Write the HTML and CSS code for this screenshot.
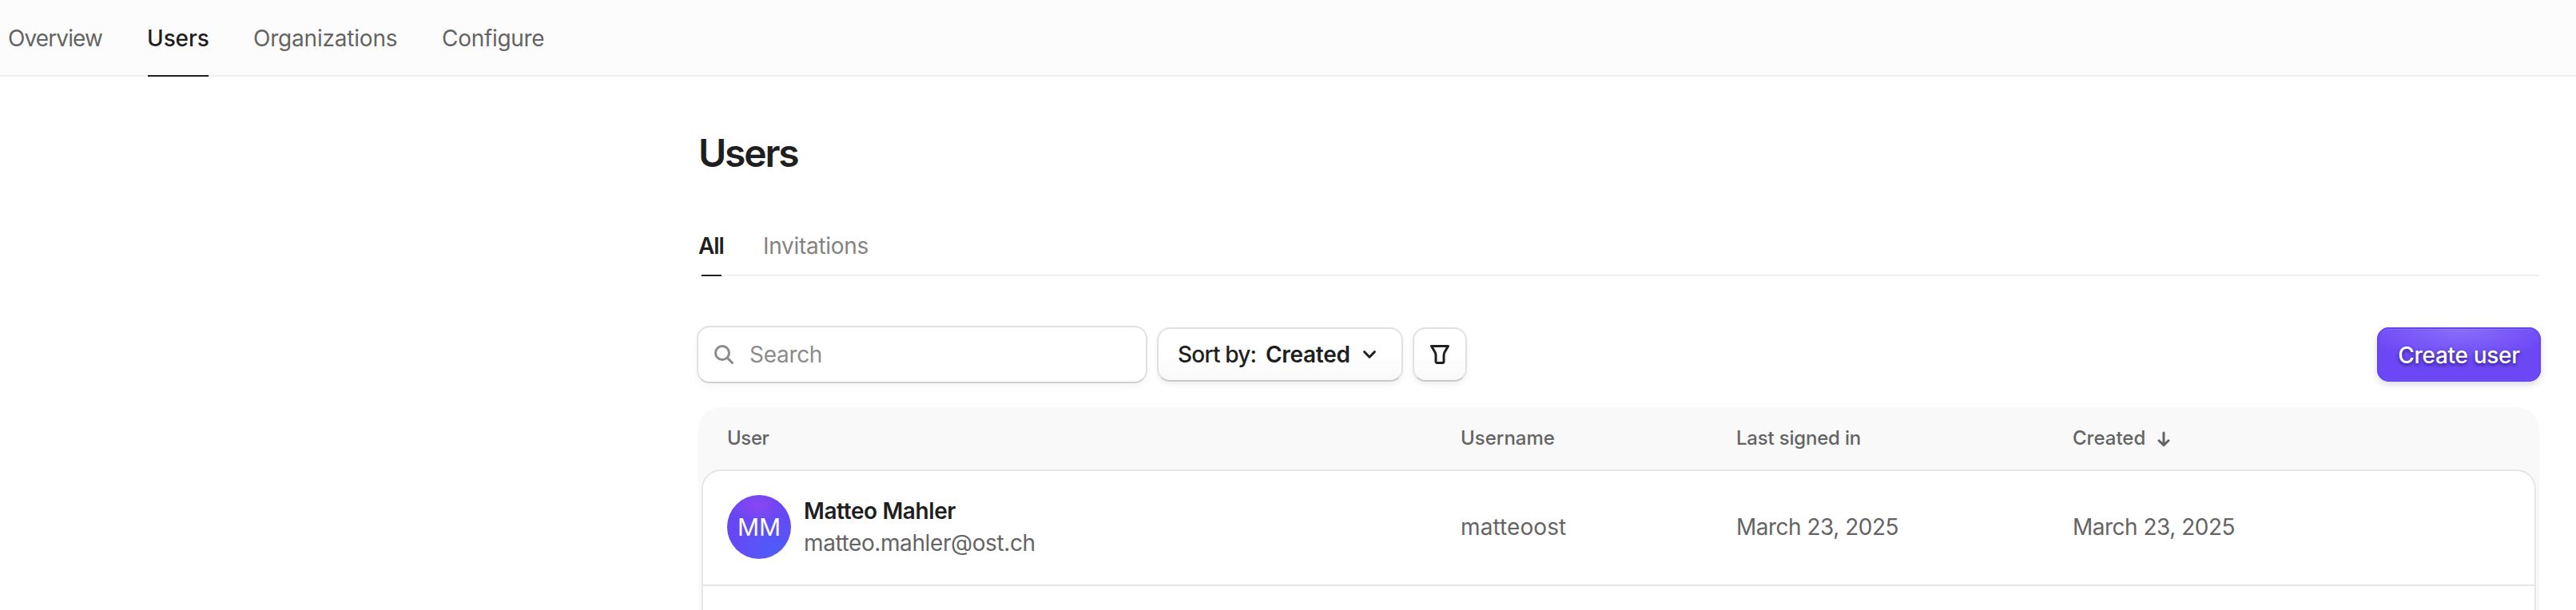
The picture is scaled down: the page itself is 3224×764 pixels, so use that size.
FILE: index.html
```html
<!DOCTYPE html>
<html lang="en">
<head>
<meta charset="utf-8">
<title>Users</title>
<link rel="stylesheet" href="styles.css">
</head>
<body>
<nav class="topnav">
  <a class="nav-item nav-overview">Overview</a>
  <a class="nav-item nav-users active">Users</a>
  <a class="nav-item nav-orgs">Organizations</a>
  <a class="nav-item nav-configure">Configure</a>
</nav>
<main class="page">
  <h1 class="title">Users</h1>
  <div class="tabs">
    <a class="tab tab-all">All</a>
    <a class="tab tab-invitations">Invitations</a>
  </div>
  <div class="toolbar">
    <div class="search">
      <svg class="icon-search" width="24" height="24" viewBox="0 0 24 24" fill="none" stroke="currentColor" stroke-width="3" stroke-linecap="round"><circle cx="10" cy="10" r="8.5"/><path d="M16.4 16.4l6 6"/></svg>
      <span class="search-text">Search</span>
    </div>
    <button class="btn sort">
      <span class="sort-label">Sort by:</span>
      <span class="sort-value">Created</span>
      <svg class="icon-chevron" width="16" height="10" viewBox="0 0 16 10" fill="none" stroke="currentColor" stroke-width="3" stroke-linecap="round" stroke-linejoin="round"><path d="M1.7 1.7L8 8.2l6.3-6.5"/></svg>
    </button>
    <button class="btn filter" aria-label="Filter">
      <svg width="24" height="24" viewBox="0 0 24 24" fill="none" stroke="currentColor" stroke-width="3" stroke-linejoin="round"><path d="M1.5 1.5h21L18.2 8.8q-1.2 2-1.2 4.2v7.8a1.7 1.7 0 0 1-1.7 1.7H8.7A1.7 1.7 0 0 1 7 20.800V13q0-2.200-1.200-4.200z"/></svg>
    </button>
    <button class="create">Create user</button>
  </div>
  <section class="table">
    <div class="thead cols">
      <span class="th-user">User</span>
      <span>Username</span>
      <span class="th-signed">Last signed in</span>
      <span class="th-created">Created
        <svg width="16" height="20" viewBox="0 0 16 20" fill="none" stroke="currentColor" stroke-width="3" stroke-linecap="round" stroke-linejoin="round"><path d="M8 2v15.500M2 11.800l6 5.900 6-5.900"/></svg>
      </span>
    </div>
    <div class="card">
      <div class="row cols">
        <div class="user">
          <div class="avatar">MM</div>
          <div>
            <div class="name">Matteo Mahler</div>
            <div class="email">matteo.mahler@ost.ch</div>
          </div>
        </div>
        <span class="username">matteoost</span>
        <span class="date">March 23, 2025</span>
        <span class="date">March 23, 2025</span>
      </div>
    </div>
  </section>
</main>
</body>
</html>
```
FILE: styles.css
```css
* { box-sizing: border-box; }
body {
  margin: 0;
  height: 764px;
  background: #fff;
  color: #1f1f1f;
  font: 400 28px/40px Inter, "Liberation Sans", sans-serif;
  white-space: nowrap;
}
.topnav {
  display: flex;
  gap: 56px;
  height: 96px;
  padding-left: 10px;
  background: #fcfcfc;
  box-shadow: inset 0 -2px #efefef;
}
.nav-item { line-height: 96px; color: #646464; }
.nav-overview { width: 119px; letter-spacing: -.9px; }
.nav-users { width: 76px; letter-spacing: -.1px; text-indent: -1px; }
.nav-orgs { width: 180px; letter-spacing: -.2px; }
.nav-configure { letter-spacing: -.3px; }
.nav-item.active { color: #1f1f1f; font-weight: 500; box-shadow: inset 0 -2px #1f1f1f; }

.page { margin-left: 874px; width: 2304px; padding-top: 68px; }
.title {
  margin: 0;
  font-size: 48px;
  line-height: 56px;
  font-weight: 600;
  letter-spacing: -2.2px;
}
.tabs {
  display: flex;
  gap: 49px;
  height: 76px;
  margin-top: 50px;
  box-shadow: inset 0 -2px #efefef;
}
.tab { line-height: 76px; color: #838383; }
.tab-all {
  width: 32px;
  color: #1f1f1f;
  font-weight: 600;
  letter-spacing: -1.1px;
  background: linear-gradient(#1f1f1f, #1f1f1f) 4px 100% / 25px 2px no-repeat;
}
.tab-invitations { letter-spacing: -.3px; }

.toolbar { display: flex; align-items: center; margin: 62px -2px 0; height: 72px; }
.search {
  display: flex;
  align-items: center;
  width: 564px;
  height: 72px;
  padding-left: 20px;
  border: 2px solid #e1e1e1;
  border-bottom-color: #d0d0d0;
  border-radius: 16px;
  color: #8c8c8c;
  box-shadow: 0 4px 8px rgba(0, 0, 0, .04);
}
.search-text { margin-left: 20px; letter-spacing: -.3px; }
.btn {
  display: flex;
  align-items: center;
  height: 68px;
  padding: 0;
  border: 2px solid #e1e1e1;
  border-bottom-color: #c8c8c8;
  border-radius: 16px;
  background: linear-gradient(#fff 50%, #f9f9f9);
  color: #1f1f1f;
  font: inherit;
  box-shadow: 0 4px 6px rgba(0, 0, 0, .06);
}
.sort { width: 308px; margin-left: 12px; padding-left: 24px; }
.sort-label { width: 110px; text-align: left; font-weight: 500; letter-spacing: -.8px; }
.sort-value { width: 122px; text-align: left; font-weight: 600; letter-spacing: -.3px; }
.filter { width: 68px; margin-left: 12px; justify-content: center; }
.create {
  width: 205px;
  height: 68px;
  margin-left: auto;
  padding: 1px 0 0;
  border: 0;
  border-radius: 15px;
  color: #fff;
  font: 500 28px/40px Inter, sans-serif;
  letter-spacing: -.3px;
  text-shadow: 0 2px 4px rgba(20, 10, 70, .7);
  background: radial-gradient(ellipse 60% 65% at 50% 0, #8a70fb, #6c47f5);
  box-shadow: inset 0 0 0 2px #6344f0, inset 0 4px 1px -1px rgba(255, 255, 255, .14), inset 0 -4px 1px -1px rgba(255, 255, 255, .07), 0 4px 8px rgba(30, 10, 90, .15);
}

.table {
  height: 254px;
  margin-top: 30px;
  padding: 0 4px;
  border-radius: 28px 28px 0 0;
  background: #f9f9f9;
}
.cols { display: grid; grid-template-columns: 918px 345px 421px 1fr; }
.thead {
  height: 78px;
  padding-left: 32px;
  align-items: center;
  color: #646464;
  font-size: 24px;
  font-weight: 500;
}
.th-user { letter-spacing: -.4px; }
.th-signed { letter-spacing: -.2px; }
.th-created { display: flex; align-items: center; gap: 15px; }
.th-created svg { position: relative; top: 1px; }
.card {
  height: 176px;
  border: 2px solid #e6e6e6;
  border-bottom: 0;
  border-radius: 24px 24px 0 0;
  background: #fff;
}
.row {
  height: 144px;
  padding: 30px 0 32px 30px;
  align-items: center;
  border-bottom: 2px solid #e6e6e6;
  color: #646464;
}
.user { display: flex; align-items: center; gap: 16px; }
.avatar {
  width: 80px;
  height: 80px;
  border-radius: 50%;
  background:
    radial-gradient(ellipse 36px 24px at 48% 16%, #8b46f2, rgba(139, 70, 242, 0)),
    radial-gradient(circle 54px at 72% 88%, #4f5cf8, rgba(79, 92, 248, 0)),
    #6747f5;
  color: #fff;
  font-size: 30px;
  font-weight: 400;
  line-height: 80px;
  text-align: center;
}
.name { color: #1f1f1f; font-weight: 600; letter-spacing: -.4px; }
.email { letter-spacing: -.4px; }
.username { letter-spacing: .1px; }
.date { letter-spacing: -.5px; }
```
